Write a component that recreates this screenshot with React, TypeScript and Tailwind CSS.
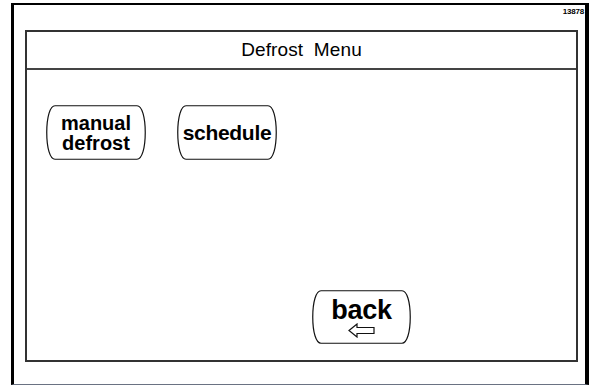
import React from "react";

function Pill({ w, h, children }: { w: number; h: number; children: React.ReactNode }) {
  const r = 9;
  const d = `M ${r} 0.75 L ${w - r} 0.75 C ${w - 4} 0.75 ${w - 0.75} ${h * 0.22} ${w - 0.75} ${h / 2} C ${w - 0.75} ${h * 0.78} ${w - 4} ${h - 0.75} ${w - r} ${h - 0.75} L ${r} ${h - 0.75} C 4 ${h - 0.75} 0.75 ${h * 0.78} 0.75 ${h / 2} C 0.75 ${h * 0.22} 4 0.75 ${r} 0.75 Z`;
  return (
    <div className="relative flex flex-col items-center justify-center shrink-0" style={{ width: w, height: h }}>
      <svg className="absolute inset-0" width={w} height={h} viewBox={`0 0 ${w} ${h}`}>
        <path d={d} fill="white" stroke="#111" strokeWidth="1.2" />
      </svg>
      <div className="relative flex flex-col items-center">{children}</div>
    </div>
  );
}

export default function App() {
  return (
    <div
      className="w-[590px] h-[386px] bg-white overflow-hidden"
      style={{ fontFamily: '"Liberation Sans", Arial, sans-serif' }}
    >
      <div className="ml-[11px] mt-[3px] w-[578px] h-[382px] border-t-2 border-l-[3px] border-r-[4px] border-b border-t-black border-l-black border-r-black border-b-gray-500 flex flex-col">
        <div className="h-[25px] flex justify-end items-start pr-[1px] pt-[3px]">
          <span className="text-[8px] font-bold leading-none text-black tracking-tight">13878</span>
        </div>
        <div className="ml-[11px] w-[553px] h-[332px] border-2 border-[#333] flex flex-col">
          <div className="h-[38px] border-b-2 border-[#444] flex items-center justify-center">
            <span className="text-[19px] text-black tracking-[0.1px]">Defrost&nbsp; Menu</span>
          </div>
          <div className="flex flex-col pl-[19px] pt-[35px]">
            <div className="flex gap-[31px]">
              <Pill w={100} h={55}>
                <span className="text-[20px] font-bold leading-[20px] text-black">manual</span>
                <span className="text-[20px] font-bold leading-[20px] text-black">defrost</span>
              </Pill>
              <Pill w={100} h={55}>
                <span className="text-[21px] font-bold leading-[22px] text-black tracking-[-0.3px]">schedule</span>
              </Pill>
            </div>
            <div className="ml-[266px] mt-[130px]">
              <Pill w={99} h={54}>
                <span className="text-[27px] font-bold leading-[26px] text-black tracking-[-0.3px]">back</span>
                <svg width="28" height="15" viewBox="0 0 28 15">
                  <path d="M1 7.5 L9 1 L9 4.5 L26 4.5 L26 10.5 L9 10.5 L9 14 Z" fill="white" stroke="#111" strokeWidth="1.2" />
                </svg>
              </Pill>
            </div>
          </div>
        </div>
      </div>
    </div>
  );
}
